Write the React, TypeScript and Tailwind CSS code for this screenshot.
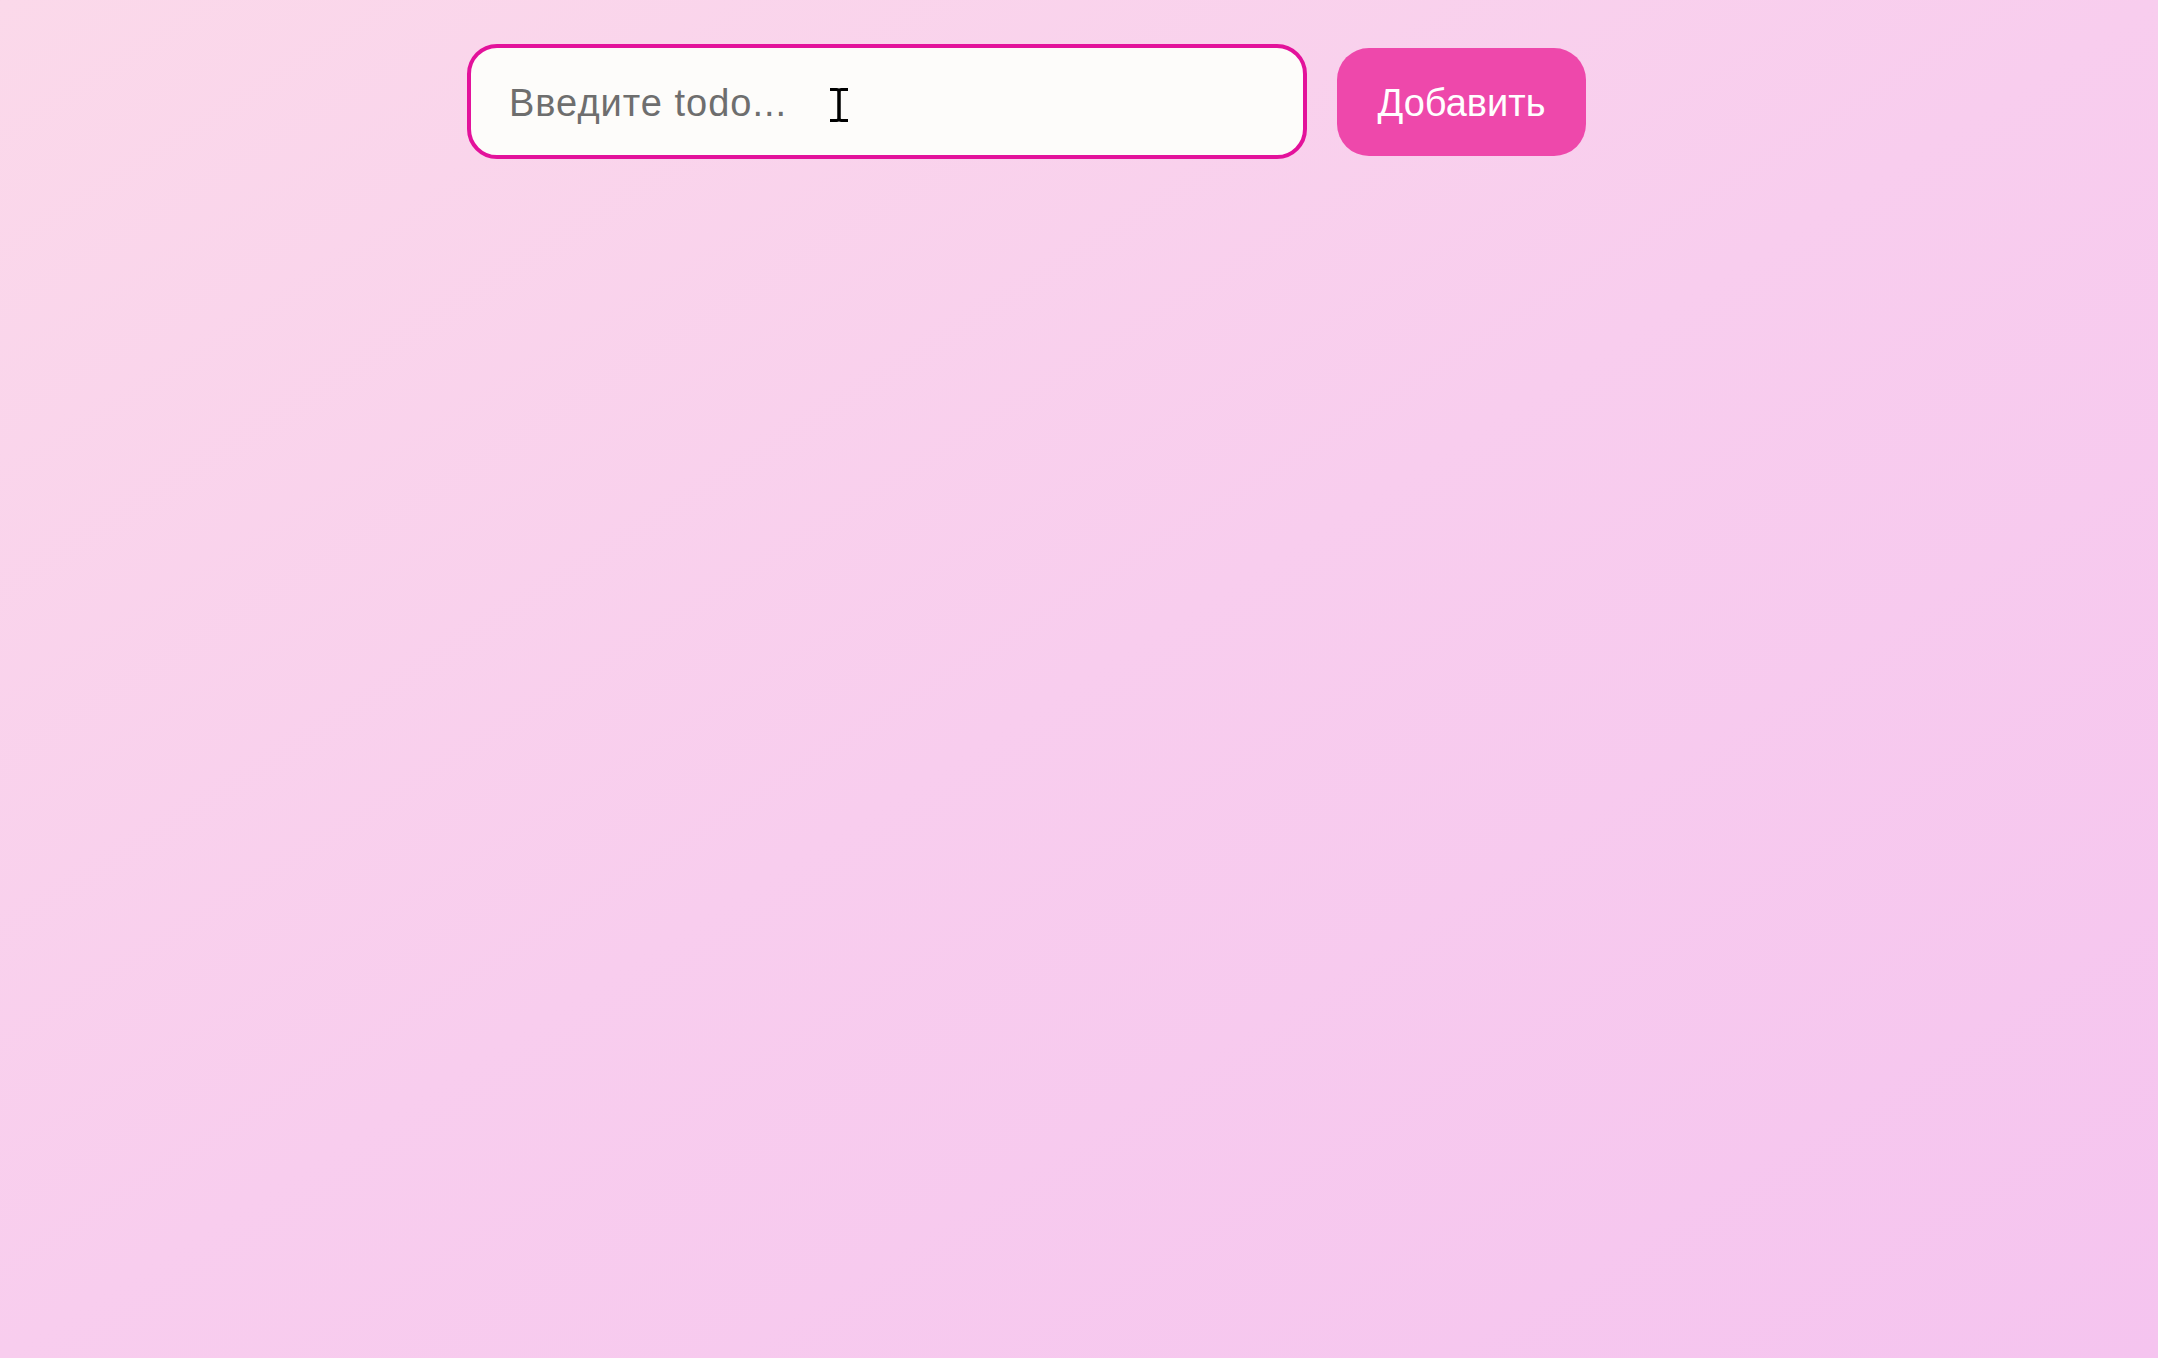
import React from 'react';

function IBeam() {
	return (
		<svg width="22" height="36" viewBox="0 0 22 36" className="pointer-events-none absolute left-[361px] top-[43px]">
			<path d="M2 2.5h6.5c1.5 0 2.5 1 2.5 2.5v26c0 1.5-1 2.5-2.5 2.5H2" fill="none" stroke="#000" strokeWidth="3" />
			<path d="M20 2.5h-6.5c-1.5 0-2.5 1-2.5 2.5v26c0 1.5 1 2.5 2.5 2.5H20" fill="none" stroke="#000" strokeWidth="3" />
		</svg>
	);
}

export default function App() {
	return (
		<div className="min-h-[1358px] w-full bg-gradient-to-br from-[#fbd9ea] via-[#f8cdee] to-[#f5c4ef] font-['Liberation_Sans',Arial,sans-serif]">
			<div className="mx-auto flex w-[1224px] items-center gap-[30px] pt-[44px]">
				<div className="relative">
					<input
						type="text"
						placeholder="Введите todo..."
						className="h-[115px] w-[840px] rounded-[30px] border-4 border-[#e3129b] bg-[#fdfcfa] pl-[38px] pr-6 pt-[3px] text-[38px] tracking-[1px] text-[#333] outline-none placeholder:text-[#6e6e6e]"
					/>
					<IBeam />
				</div>
				<button type="button" className="h-[108px] w-[249px] rounded-[32px] bg-[#ee48ab] pt-[3px] text-[38px] text-white">
					Добавить
				</button>
			</div>
		</div>
	);
}
